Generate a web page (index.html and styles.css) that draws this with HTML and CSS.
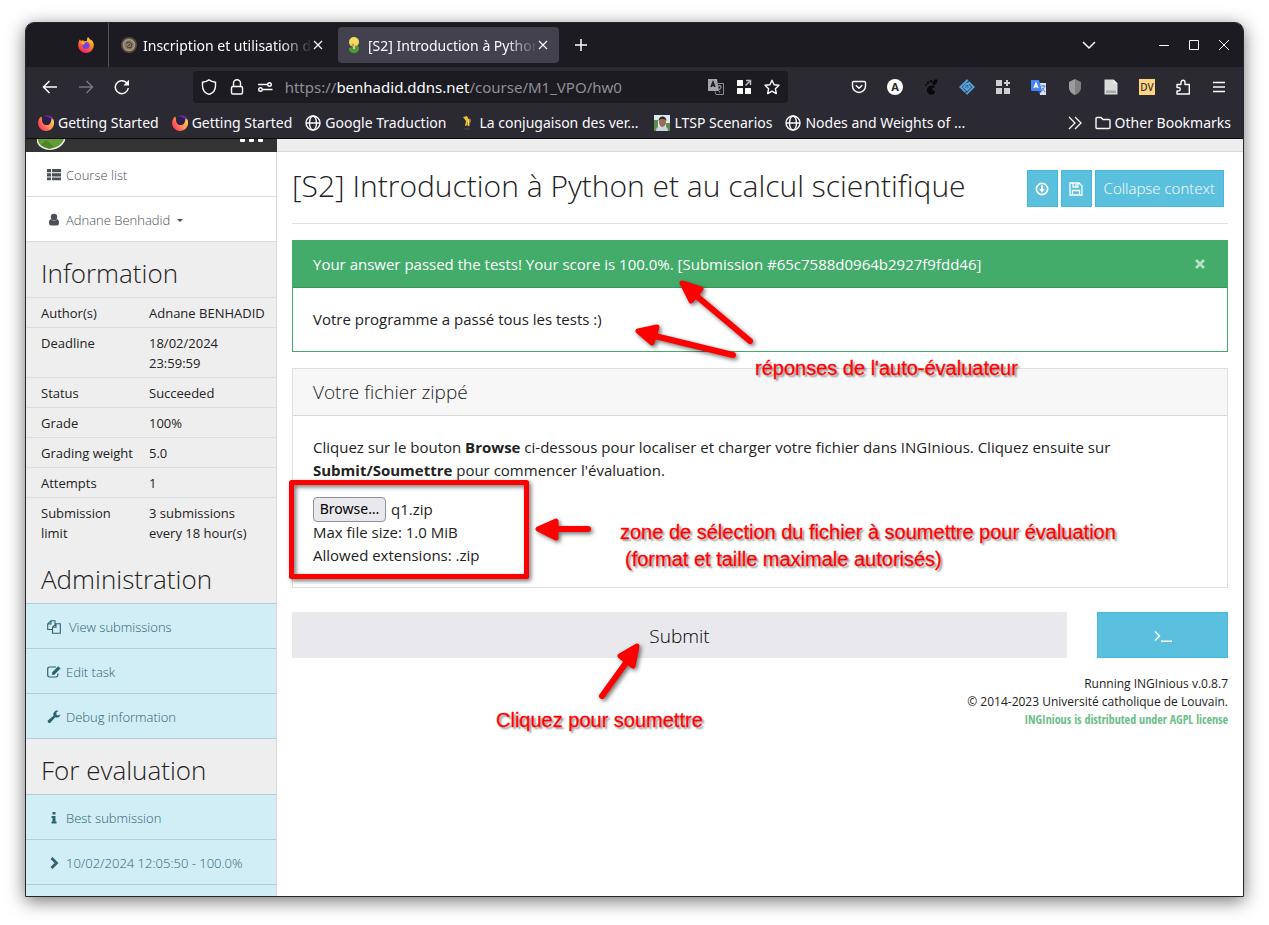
FILE: index.html
```html
<!DOCTYPE html>
<html lang="fr">
<head>
<meta charset="utf-8">
<title>[S2] Introduction à Python et au calcul scientifique</title>
<link rel="stylesheet" href="styles.css">
</head>
<body>
<svg class="defs" aria-hidden="true">
  <defs>
    <linearGradient id="flame" x1="0.8" y1="0" x2="0.3" y2="1"><stop offset="0" stop-color="#ffe03a"/><stop offset="0.45" stop-color="#ff8a1e"/><stop offset="1" stop-color="#f5156c"/></linearGradient>
    <linearGradient id="ring" x1="0" y1="0.8" x2="1" y2="0.2"><stop offset="0" stop-color="#ff2a5f"/><stop offset="0.5" stop-color="#ff8a50"/><stop offset="1" stop-color="#ffd567"/></linearGradient>
    <symbol id="i-firefox" viewBox="0 0 16 16"><path fill="url(#flame)" d="M10 0c1 1 1.500 2 2.600 2.800C14 3 16 5.500 15.800 8.500 15.500 13 12 16 8 16S.300 12.800.200 8.500C.100 6 .800 4 2 2.300L3 4l2-1 1 1.300L9 3.800C9 2.300 9.200 1 10 0z"/><circle cx="8" cy="8.500" r="3.600" fill="#7542e5"/><path d="M3 5c2-.8 4 0 5 1-1.500 0-2 1-2 1.500C5 8 3.500 7 3 5z" fill="#ffb52e"/></symbol>
    <symbol id="i-start" viewBox="0 0 16 16"><path d="M3 1.500C-1 5-1 12 4 15c5 2.500 11 0 12-6 .3-4-1-6-3-7.500 1 3 0 7-3 8-3 .8-6-1-6-4 0-1.500 0-3-1-4z" fill="url(#ring)"/><path d="M6 1.200C9-.8 14 .5 15.500 5c-1-1-2-1.500-3-1.300C11 2 8.500 1 6 1.200z" fill="#7a1cc0"/><path d="M5 4c1-2 4-2.500 6-1 2 2 2 5 0 6.500-3 1.500-6 0-6-2z" fill="#2b2048"/></symbol>
    <symbol id="i-globe" viewBox="0 0 16 16"><g fill="none" stroke="currentColor" stroke-width="1.400"><circle cx="8" cy="8" r="7"/><ellipse cx="8" cy="8" rx="3.500" ry="7"/><path d="M1 8h14"/></g></symbol>
    <symbol id="i-x" viewBox="0 0 10 10"><path d="M1 1l8 8M9 1l-8 8" fill="none" stroke="currentColor" stroke-width="1.200"/></symbol>
  </defs>
</svg>

<div class="window">
  <header class="chrome">
    <div class="tabs">
      <button class="pin" aria-label="Firefox"><svg class="i16"><use href="#i-firefox"/></svg></button>
      <div class="tab">
        <svg class="i16" viewBox="0 0 16 16"><circle cx="8" cy="8" r="8" fill="#5b4a40"/><circle cx="8" cy="8" r="5.500" fill="#857862" stroke="#a79a80" stroke-width="1.500"/><path d="M5 6l3-1 3 2-1 4-4-1 3-3" fill="none" stroke="#4a4038"/></svg>
        <span class="tab-title">Inscription et utilisation de</span>
        <button class="close" aria-label="Close tab"><svg class="i10"><use href="#i-x"/></svg></button>
      </div>
      <div class="tab tab-on">
        <svg class="i16" viewBox="0 0 16 16"><ellipse cx="8" cy="5" rx="5" ry="5" fill="#f1dc62"/><path d="M3 11c2-1 4 0 5-2 2-1 5-1 5 2s-2 5-5 5-4-1-5-3z" fill="#4d9a37"/><path d="M8 7v5" stroke="#e8e8c0" stroke-width="1.500"/><circle cx="7" cy="8" r="1.500" fill="#e8872c"/></svg>
        <span class="tab-title">[S2] Introduction à Python</span>
        <button class="close" aria-label="Close tab"><svg class="i10"><use href="#i-x"/></svg></button>
      </div>
      <button class="tool" aria-label="New tab"><svg class="i14" viewBox="0 0 14 14"><path d="M7 1v12M1 7h12" stroke="currentColor" stroke-width="1.500"/></svg></button>
      <div class="grow"></div>
      <button class="tool list-tabs" aria-label="List tabs"><svg class="i14" viewBox="0 0 14 14"><path d="M1 4l6 6 6-6" fill="none" stroke="currentColor" stroke-width="1.500"/></svg></button>
      <button class="winbtn" aria-label="Minimize"><svg class="i12" viewBox="0 0 12 12"><path d="M1 6.500h10" stroke="currentColor"/></svg></button>
      <button class="winbtn" aria-label="Maximize"><svg class="i12" viewBox="0 0 12 12"><path d="M1.500 1.500h9v9h-9z" fill="none" stroke="currentColor"/></svg></button>
      <button class="winbtn" aria-label="Close"><svg class="i12" viewBox="0 0 12 12"><path d="M1 1l10 10M11 1L1 11" stroke="currentColor"/></svg></button>
    </div>

    <nav class="toolbar" aria-label="Navigation">
      <button class="tool" aria-label="Back"><svg class="i16" viewBox="0 0 16 16"><path d="M15 8H1.500M7.500 2L1.500 8l6 6" fill="none" stroke="currentColor" stroke-width="1.500"/></svg></button>
      <button class="tool dim" aria-label="Forward"><svg class="i16" viewBox="0 0 16 16"><path d="M1 8h13.500M8.500 2l6 6-6 6" fill="none" stroke="currentColor" stroke-width="1.500"/></svg></button>
      <button class="tool" aria-label="Reload"><svg class="i16" viewBox="0 0 16 16"><path d="M14.300 9A6.500 6.500 0 1 1 12.500 3.600L14 5" fill="none" stroke="currentColor" stroke-width="1.500"/><path d="M15 .8V6.500H9.300z" fill="currentColor"/></svg></button>
      <div class="spacer"></div>
      <div class="urlbar">
        <svg class="i16" viewBox="0 0 16 16"><path d="M8 .9c2 1.500 4 2 6.500 2.300v3.500C14.500 11 12 14 8 15.300 4 14 1.500 11 1.500 6.700V3.200C4 2.900 6 2.400 8 .9z" fill="none" stroke="currentColor" stroke-width="1.400"/></svg>
        <svg class="i16" viewBox="0 0 16 16"><path d="M4.500 7.500V4.300a3.500 3.500 0 0 1 7 0v3.200" fill="none" stroke="currentColor" stroke-width="1.400"/><rect x="2.500" y="7.500" width="11" height="7.500" rx="1.500" fill="none" stroke="currentColor" stroke-width="1.400"/></svg>
        <svg class="i16" viewBox="0 0 16 16"><g fill="none" stroke="currentColor" stroke-width="1.400"><path d="M1 5.500h9.500M6 10.500h9.500"/><circle cx="12.500" cy="5.500" r="1.800"/><circle cx="3.500" cy="10.500" r="1.800"/></g></svg>
        <div class="url" role="textbox" aria-label="Address">https://<b>benhadid.ddns.net</b>/course/M1_VPO/hw0</div>
        <svg class="i16" viewBox="0 0 16 16"><path d="M0 0h9l2 12H0z" fill="#a5a5aa"/><path d="M8 4.500h7.500v11H8l-1-3" fill="none" stroke="#8b8b90"/><path d="M3 8l2-5 2 5M3.500 6.500h3" fill="none" stroke="#1c1b22" stroke-width="1.500"/><path d="M10 8c0-2 3-2 3 0s-1.500 1-1.500 3M11.500 12v1.500" fill="none" stroke="#8b8b90" stroke-width="1.300"/></svg>
        <svg class="i16" viewBox="0 0 16 16"><g fill="currentColor"><rect x="1" y="1" width="6" height="6" rx=".5"/><rect x="1" y="9" width="6" height="6" rx=".5"/><rect x="9" y="9" width="6" height="6" rx=".5"/></g><path d="M10 1.500h4.500V6M14 2L9.500 6.500" fill="none" stroke="#bbb" stroke-width="1.500"/></svg>
        <svg class="i16" viewBox="0 0 16 16"><path d="M8 1.200l2.100 4.500 4.900.6-3.600 3.400.9 4.900L8 12.200l-4.300 2.400.9-4.900L1 6.300l4.900-.6z" fill="none" stroke="currentColor" stroke-width="1.400" stroke-linejoin="round"/></svg>
      </div>
      <div class="spacer"></div>
      <button class="tool" aria-label="Pocket"><svg class="i16" viewBox="0 0 16 16"><path d="M2.500 2.500h11a1 1 0 0 1 1 1V7a6.500 6.500 0 0 1-13 0V3.500a1 1 0 0 1 1-1z" fill="none" stroke="currentColor" stroke-width="1.400"/><path d="M4.800 6.300L8 9.300l3.200-3" fill="none" stroke="currentColor" stroke-width="1.500"/></svg></button>
      <button class="tool" aria-label="Account"><span class="badge-a">A</span></button>
      <button class="tool" aria-label="GNOME"><svg class="i16" viewBox="0 0 16 16" fill="#08080a"><ellipse cx="12" cy="3.200" rx="2" ry="3.200" transform="rotate(35 12 3.200)"/><circle cx="8" cy="2.300" r="1.400"/><circle cx="5" cy="3.800" r="1.200"/><circle cx="3" cy="6" r="1"/><path d="M12 7.500c-2-2-8-1-8 3.500 0 6 8 6 8 2 0-2-3-1-3-3 0-1 3-1 3-2.500z"/></svg></button>
      <button class="tool" aria-label="Git"><svg class="i16" viewBox="0 0 16 16"><g fill="none" stroke="#55a0dc" stroke-width="2"><path d="M9 2L8 1.400 1.400 8l5.100 5.100M7 14l1 .6L14.600 8 9.500 2.900"/><path d="M10 5.500L8 4.500 4.800 8 8 11l3-3-2-2"/></g><circle cx="8" cy="8" r="1" fill="#55a0dc"/></svg></button>
      <button class="tool" aria-label="Add-ons"><svg class="i16" viewBox="0 0 16 16" fill="#cfcfd1"><rect x="1" y="1" width="6" height="6"/><rect x="1" y="9" width="6" height="6"/><rect x="9" y="9" width="6" height="6"/><path d="M11 1h2v2h2v2h-2v2h-2V5H9V3h2z"/></svg></button>
      <button class="tool" aria-label="Translate"><svg class="i16" viewBox="0 0 16 16"><path d="M7 4h8v12H9z" fill="#dcdee2"/><path d="M0 1h8l3 11H1L0 11z" fill="#4385f4"/><path d="M3 9l2-5 2 5M3.700 7.500h2.600" fill="none" stroke="#fff" stroke-width="1.300"/><path d="M9.500 7h5M12 6v1M13.500 7c0 2-2 4-3 5M11 9l3 4" fill="none" stroke="#4385f4"/><path d="M7 12h4l-3 3z" fill="#1f4fb4"/></svg></button>
      <button class="tool" aria-label="Shield"><svg class="i16" viewBox="0 0 16 16"><path d="M8 0l6 3v6c0 3-3 6-6 7z" fill="#7f7f82"/><path d="M8 0L2 3v6c0 3 3 6 6 7z" fill="#9c9c9e"/></svg></button>
      <button class="tool" aria-label="Disk"><svg class="i16" viewBox="0 0 16 16"><path d="M1.500.5h9l4 4v11h-13z" fill="#d9dada"/><path d="M10.500.5v4h4z" fill="#f5f5f5"/><rect x="3" y="11.500" width="10" height="2.500" fill="#a9abac"/></svg></button>
      <button class="tool" aria-label="DV"><span class="badge-dv">DV</span></button>
      <button class="tool" aria-label="Extensions"><svg class="i16" viewBox="0 0 16 16"><path d="M2 5.500h4V3.300a2 2 0 0 1 4 0v2.200h4.300V15H2v-3h1.500a1.700 1.700 0 0 0 0-3.500H2z" fill="none" stroke="currentColor" stroke-width="1.400" stroke-linejoin="round"/></svg></button>
      <button class="tool" aria-label="Menu"><svg class="i16" viewBox="0 0 16 16"><path d="M2 3.500h12M2 8h12M2 12.500h12" stroke="currentColor" stroke-width="1.400"/></svg></button>
    </nav>

    <nav class="bookmarks" aria-label="Bookmarks">
      <a href="#"><svg class="i16"><use href="#i-start"/></svg>Getting Started</a>
      <a href="#"><svg class="i16"><use href="#i-start"/></svg>Getting Started</a>
      <a href="#"><svg class="i16"><use href="#i-globe"/></svg>Google Traduction</a>
      <a href="#" class="wide"><svg class="i16" viewBox="0 0 16 16"><path d="M4 2l4-1 2 4-1 5-3 1 1-5z" fill="#e5c526"/><path d="M11 3l1 3-3 6-1-4z" fill="#c77b22"/><path d="M5 13h6v2H5z" fill="#3d3a42"/><path d="M9 4l1 7" stroke="#efe9b0"/></svg>La conjugaison des ver...</a>
      <a href="#"><svg class="i16" viewBox="0 0 16 16"><path fill="#dfe8ee" d="M0 0h16v16H0z"/><path fill="#5f8c4c" d="M0 5h4v11H0zM12 8h4v8h-4z"/><path fill="#c9d4dc" d="M2 16c0-4 3-5 6-5s6 1 6 5z"/><ellipse cx="8.500" cy="7" rx="3.500" ry="5" fill="#9c6b55"/><path fill="#26262e" d="M4.500 6c0-6 8-6 8 0-2-3-6-3-8 0z"/></svg>LTSP Scenarios</a>
      <a href="#"><svg class="i16"><use href="#i-globe"/></svg>Nodes and Weights of ...</a>
      <div class="grow"></div>
      <button class="more" aria-label="More bookmarks"><svg class="i14" viewBox="0 0 14 14"><path d="M1 1l6 6-6 6M7 1l6 6-6 6" fill="none" stroke="currentColor" stroke-width="1.300"/></svg></button>
      <a href="#"><svg class="i16" viewBox="0 0 16 16"><path d="M1 12.500v-9a1 1 0 0 1 1-1h4l2 2h6a1 1 0 0 1 1 1v7a1 1 0 0 1-1 1H2a1 1 0 0 1-1-1z" fill="none" stroke="currentColor" stroke-width="1.400"/></svg>Other Bookmarks</a>
    </nav>
  </header>

  <div class="page">
    <aside class="sidebar">
      <div class="brand">
        <svg class="logo" viewBox="0 0 28 13"><ellipse cx="14" cy="-1" rx="14" ry="11" transform="rotate(-12 14 -1)" fill="#639c35" stroke="#f0f0f0" stroke-width="1.500"/><path d="M4 6l5-5 8 7-5 2z" fill="#4d8527"/></svg>
        <svg class="dots" viewBox="0 0 23 13" fill="#fff"><rect y="-3" width="5" height="6" rx="1"/><rect x="9" y="-3" width="5" height="6" rx="1"/><rect x="18" y="-3" width="5" height="6" rx="1"/></svg>
      </div>
      <nav class="menu" aria-label="Main">
        <a href="#"><svg class="i14" viewBox="0 0 14 14" fill="#495057"><path d="M0 1h4v3.200H0zM5 1h9v3.200H5zM0 5.200h4v3.200H0zM5 5.200h9v3.200H5zM0 9.400h4v2.800H0zM5 9.400h9v2.800H5z"/></svg>Course list</a>
        <a href="#"><svg class="i14" viewBox="0 0 14 14" fill="#495057"><circle cx="7" cy="4" r="3.200"/><path d="M4 6c-1.500.5-2 2-2 4 0 1.500.8 2.500 2 2.500h6c1.200 0 2-1 2-2.500 0-2-.5-3.500-2-4-2 2-4 2-6 0z"/></svg>Adnane Benhadid<span class="caret"></span></a>
      </nav>
      <h3>Information</h3>
      <table class="info">
        <tr><th scope="row">Author(s)</th><td>Adnane BENHADID</td></tr>
        <tr class="wrap"><th scope="row">Deadline</th><td>18/02/2024 23:59:59</td></tr>
        <tr><th scope="row">Status</th><td>Succeeded</td></tr>
        <tr><th scope="row">Grade</th><td>100%</td></tr>
        <tr><th scope="row">Grading weight</th><td>5.0</td></tr>
        <tr><th scope="row">Attempts</th><td>1</td></tr>
        <tr class="wrap"><th scope="row">Submission limit</th><td>3 submissions every 18 hour(s)</td></tr>
      </table>
      <h3>Administration</h3>
      <nav class="menu blue" aria-label="Administration">
        <a href="#"><svg class="i14" viewBox="0 0 14 14"><path d="M5 9.500H.7V4L4 .7h4V4M4 .7V4H.700M5.500 13.300v-6L9 3.700h4.300v9.600zM9 3.700v3.600H5.500M8 .7V4" fill="none" stroke="#2d6472" stroke-width="1.100"/></svg><span class="indent">View submissions</span></a>
        <a href="#"><svg class="i14" viewBox="0 0 14 14"><path d="M9 2H2.500A1.800 1.800 0 0 0 .7 3.800v6.500A1.800 1.800 0 0 0 2.500 12H9a1.800 1.800 0 0 0 1.800-1.700V8.500" fill="none" stroke="#2d6472" stroke-width="1.200"/><path d="M5 7.500L11.200 1.200 13.500 3.500 7.300 9.800H5z" fill="#2d6472"/></svg>Edit task</a>
        <a href="#"><svg class="i14" viewBox="0 0 14 14"><path d="M13.500 4.500a3.800 3.800 0 0 1-5.200 2.800L3.600 12.500a1.700 1.700 0 0 1-2.500-2.300L6.500 5.700A3.800 3.800 0 0 1 11.500.9L9.300 2.500v2l1.600 1z" fill="#2d6472"/></svg>Debug information</a>
      </nav>
      <h3>For evaluation</h3>
      <nav class="menu blue" aria-label="Evaluation">
        <a href="#"><svg class="i14" viewBox="0 0 14 14" fill="#2d6472"><path d="M5.500 1h3v2.500h-3zM4.500 5h4v5.500h1v2h-5v-2h1V7h-1z"/></svg>Best submission</a>
        <a href="#"><svg class="i14" viewBox="0 0 14 14"><path d="M4.500 2l5 5-5 5" fill="none" stroke="#2d6472" stroke-width="2.800"/></svg>10/02/2024 12:05:50 - 100.0%</a>
        <a href="#" aria-label="Older submissions"></a>
      </nav>
    </aside>

    <div class="content">
      <div class="strip"></div>
      <main>
        <div class="title">
          <h1>[S2] Introduction à Python et au calcul scientifique</h1>
          <div class="actions">
            <button class="btn icon" aria-label="Download"><svg class="i14" viewBox="0 0 14 14"><circle cx="7" cy="7" r="5.600" fill="none" stroke="#fff" stroke-width="1.700"/><path d="M6 3.500h2V7h2l-3 3.500L4 7h2z" fill="#fff"/></svg></button>
            <button class="btn icon" aria-label="Save"><svg class="i14" viewBox="0 0 14 14"><path d="M1 1h9l3 3v9H1zM3.500 13V8.500h7V13M4 1v4h5V1M7 2v2" fill="none" stroke="#fff" stroke-width="1.300"/></svg></button>
            <button class="btn">Collapse context</button>
          </div>
        </div>

        <section class="card success">
          <div class="card-head"><span>Your answer passed the tests! Your score is 100.0%. [Submission #65c7588d0964b2927f9fdd46]</span><button class="dismiss" aria-label="Close"><svg class="i10" viewBox="0 0 10 10"><path d="M1 1l8 8M9 1L1 9" stroke="#b9e0c7" stroke-width="2.600"/></svg></button></div>
          <div class="card-body">Votre programme a passé tous les tests :)</div>
        </section>

        <section class="card">
          <h2 class="card-head">Votre fichier zippé</h2>
          <div class="card-body">
            <p>Cliquez sur le bouton <strong>Browse</strong> ci-dessous pour localiser et charger votre fichier dans INGInious. Cliquez ensuite sur <strong>Submit/Soumettre</strong> pour commencer l'évaluation.</p>
            <div class="file"><button class="browse">Browse…</button><span>q1.zip</span></div>
            <div>Max file size: 1.0 MiB</div>
            <div>Allowed extensions: .zip</div>
          </div>
        </section>

        <div class="submit-row">
          <button class="submit">Submit</button>
          <button class="btn term" aria-label="Terminal"><svg viewBox="0 0 18 14"><path d="M1 3.500l4.500 4.500L1 12.500M7 13.300h11" fill="none" stroke="#fff" stroke-width="1.400"/></svg></button>
        </div>

        <footer>
          <div>Running INGInious v.0.8.7</div>
          <div>© 2014-2023 Université catholique de Louvain.</div>
          <a href="#">INGInious is distributed under AGPL license</a>
        </footer>
      </main>
    </div>
  </div>
</div>

<div class="notes">
  <svg class="arrows" width="1269" height="925" viewBox="0 0 1269 925" fill="none" stroke="#f00" stroke-linecap="round" stroke-linejoin="round">
    <rect x="291.500" y="482.500" width="235" height="94" stroke-width="5"/>
    <g stroke-width="6"><path d="M693 293L750 341M655 336L733 355M556 529H588M628 660L602 696"/></g>
    <g stroke-width="5" fill="#f00"><path d="M682 283L701 289 691 301zM638 331L657 327 652 343zM538 529L556 521V538zM637 646L620 656 633 666z"/></g>
  </svg>
  <span class="note n1">réponses de l'auto-évaluateur</span>
  <span class="note n2">zone de sélection du fichier à soumettre pour évaluation</span>
  <span class="note n3">(format et taille maximale autorisés)</span>
  <span class="note n4">Cliquez pour soumettre</span>
</div>
</body>
</html>
```
FILE: styles.css
```css
* { box-sizing: border-box; }
body {
  margin: 0;
  height: 100vh;
  padding: 22px 25px 28px;
  background: #fff;
  position: relative;
  overflow: hidden;
  font-family: "Open Sans", sans-serif;
  font-size: 15px;
  line-height: 23px;
  color: #222;
}
button { font: inherit; color: inherit; background: none; border: 0; padding: 0; margin: 0; }
a { text-decoration: none; color: inherit; }
svg { display: block; flex: none; }
.defs { position: absolute; width: 0; height: 0; }
.i10 { width: 10px; height: 10px; }
.i12 { width: 12px; height: 12px; }
.i14 { width: 14px; height: 14px; }
.i16 { width: 16px; height: 16px; }
.grow { flex: 1; }

.window {
  height: 100%;
  display: flex;
  flex-direction: column;
  border: 1px solid #26252b;
  border-radius: 9px 9px 0 0;
  overflow: hidden;
  box-shadow: 0 4px 18px rgba(0, 0, 0, 0.55);
}

.chrome {
  background: #2b2a33;
  color: #fbfbfe;
  font-family: "Noto Sans", sans-serif;
  font-size: 15px;
  border-bottom: 1px solid #0c0c0d;
}
.tabs { display: flex; align-items: center; height: 44px; background: #1c1b22; padding-right: 4px; }
.pin { display: flex; justify-content: flex-end; align-items: center; width: 83px; height: 44px; padding-right: 14px; border-right: 1px solid #55545c; }
.tab { display: flex; align-items: center; width: 221px; height: 36px; padding: 0 11px 0 8px; border-radius: 4px; margin-left: 4px; font-size: 14px; }
.tab-on { background: #42414d; }
.tab-title {
  flex: 1;
  min-width: 0;
  margin-left: 6px;
  overflow: hidden;
  white-space: nowrap;
  mask-image: linear-gradient(to left, transparent, #000 32px);
}
.close { display: flex; }
.tool { display: flex; align-items: center; justify-content: center; width: 36px; height: 36px; flex: none; }
.tabs > .tool { margin-left: 4px; }
.tabs > .list-tabs { margin-right: 42px; }
.winbtn { display: flex; align-items: center; justify-content: center; width: 30px; height: 30px; }
.dim { color: #77767e; }

.toolbar { display: flex; align-items: center; height: 40px; padding: 0 6px; }
.spacer { flex: 1 1 0; }
.urlbar { flex: 11 1 0; min-width: 0; display: flex; align-items: center; gap: 12px; height: 32px; padding: 0 8px; background: #1c1b22; border-radius: 4px; }
.url { flex: 1; min-width: 0; overflow: hidden; white-space: nowrap; color: #8f8f95; }
.url b { font-weight: 400; color: #fbfbfe; }
.badge-a { width: 16px; height: 16px; border-radius: 50%; background: #fff; color: #2b2a33; font-size: 11px; line-height: 16px; font-weight: 700; text-align: center; }
.badge-dv { width: 16px; height: 16px; background: #ffd583; color: #333; font-size: 10px; line-height: 16px; font-weight: 500; text-align: center; }

.bookmarks { display: flex; align-items: center; gap: 13px; height: 31px; padding: 0 12px; font-size: 14px; white-space: nowrap; }
.bookmarks a { display: flex; align-items: center; gap: 4px; }
.bookmarks .wide { min-width: 182px; }

.page { flex: 1; min-height: 0; display: flex; background: #fff; overflow: hidden; }
.sidebar { flex: none; width: 251px; background: #eee; border-right: 1px solid #d9d9d9; }
.brand { display: flex; justify-content: space-between; height: 13px; margin-right: -1px; padding: 0 14px 0 11px; background: #333; overflow: hidden; }
.logo { width: 28px; height: 13px; }
.dots { width: 23px; height: 13px; }
.menu { font-size: 13px; font-weight: 300; }
.menu a { display: flex; align-items: center; gap: 5px; height: 45px; padding: 2px 0 0 21px; background: #fff; border-bottom: 1px solid #dcdcdc; color: #495057; }
.menu .indent { padding-left: 3px; }
.caret { margin-left: 2px; border: 3px solid transparent; border-top: 3px solid #495057; border-bottom: 0; }
.blue { border-top: 1px solid #b0cdd8; }
.blue a { background: #d1edf6; border-bottom-color: #b0cdd8; color: #2d6472; }
h3 { margin: 0; height: 55px; padding: 16px 15px 0; font-size: 26px; line-height: 31px; font-weight: 300; }
.info { width: 100%; border-collapse: separate; border-spacing: 0; margin-bottom: 1px; font-size: 13px; line-height: 20px; table-layout: fixed; }
.info th, .info td { border-top: 1px solid #dcdde2; padding: 5px 0 4px; vertical-align: top; text-align: left; font-weight: 400; }
.info th { width: 123px; padding-left: 15px; padding-right: 10px; }
.info .wrap td { padding-right: 15px; }

.content { flex: 1; min-width: 0; }
.strip { height: 13px; background: #eee; border-bottom: 1px solid #d9d9d9; }
main { padding: 18px 15px 0; }
.title { display: flex; justify-content: space-between; align-items: flex-start; padding: 0 4px 16px 0; border-bottom: 1px solid #e2e2e2; margin-bottom: 16px; }
h1 { margin: 0; font-size: 30px; line-height: 31px; font-weight: 300; }
.actions { display: flex; gap: 3px; }
.btn { display: flex; align-items: center; justify-content: center; height: 37px; padding: 0 8px; background: #5bc0de; border: 1px solid #46b8da; color: #fff; font-weight: 300; }
.icon { width: 31px; }

.card { border: 1px solid #dfdfdf; margin-bottom: 16px; }
.card-head { display: flex; justify-content: space-between; align-items: center; min-height: 47px; padding: 0 20px; margin: 0; background: #f7f7f7; border-bottom: 1px solid #d8d8d8; font-size: 19px; font-weight: 300; }
.card-body { padding: 20px; }
.card p { margin: 0 0 15px; }
.success { border-color: #43ac6a; }
.success .card-head { background: #43ac6a; border-color: #3a945b; color: #fff; font-size: 15px; font-weight: 400; }
.dismiss { display: flex; padding-right: 2px; }
.file { display: flex; align-items: center; gap: 5px; height: 24px; }
.browse { height: 25px; min-width: 73px; background: #e9e9ed; border: 1px solid #8f8f9d; border-radius: 4px; color: #000; font-family: "Noto Sans", sans-serif; font-size: 14px; line-height: 20px; }

.submit-row { display: grid; grid-template-columns: minmax(0, 1fr) 131px; gap: 30px; margin-top: 24px; }
.submit { height: 46px; padding-top: 2px; background: #e9e9ed; color: #000; font-size: 19px; font-weight: 300; }
.term { height: 46px; }
.term svg { width: 18px; height: 14px; }
footer { margin-top: 17px; text-align: right; font-size: 12px; line-height: 18px; }
footer a { color: #6cbd89; font-family: "Liberation Sans Narrow", "Open Sans Condensed", sans-serif; }

.notes { position: absolute; top: 0; left: 0; pointer-events: none; }
.arrows { filter: drop-shadow(2px 2px 2px rgba(0, 0, 0, 0.55)); }
.note { position: absolute; white-space: nowrap; font-family: "Liberation Sans", sans-serif; font-size: 20px; line-height: 24px; color: #f00; -webkit-text-stroke: 0.3px #f00; text-shadow: 2px 2px 2px rgba(0, 0, 0, 0.45); }
.n1 { left: 755px; top: 356px; }
.n2 { left: 620px; top: 520px; }
.n3 { left: 625px; top: 547px; }
.n4 { left: 496px; top: 708px; }
```
